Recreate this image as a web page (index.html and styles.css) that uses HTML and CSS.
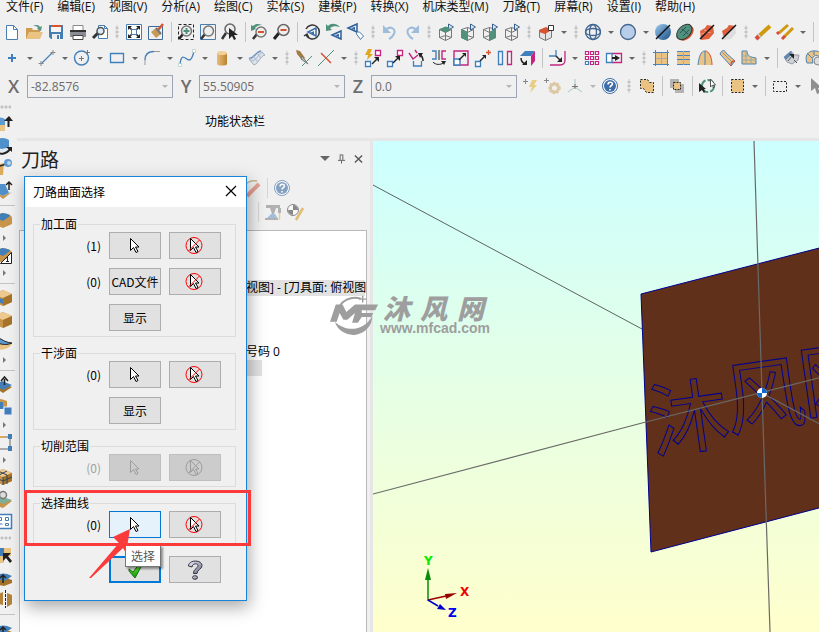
FILE: index.html
```
<!DOCTYPE html>
<html lang="zh-CN">
<head>
  <meta charset="UTF-8" />
  <meta name="viewport" content="width=device-width, initial-scale=1.0"/>
  <title>刀路曲面选择</title>
  <link rel="stylesheet" href="styles.css">
</head>
<body>

  <!-- icon set -->
  <svg class="sprite" aria-hidden="true">
    <defs>
      <linearGradient id="ball" x1="0" y1="0" x2="1" y2="1"><stop offset="0" stop-color="#9cc8ee"/><stop offset="1" stop-color="#174f86"/></linearGradient>
      <linearGradient id="gold" x1="0" x2="1"><stop offset="0" stop-color="#e8bd78"/><stop offset="1" stop-color="#bb8231"/></linearGradient>
      <linearGradient id="tick" x1="0" y1="0" x2="0" y2="1"><stop offset="0" stop-color="#7be33c"/><stop offset="1" stop-color="#0b9a0b"/></linearGradient>
      <linearGradient id="silver" x1="0" y1="0" x2="1" y2="1"><stop offset="0" stop-color="#eef"/><stop offset="1" stop-color="#66697c"/></linearGradient>
    </defs>
    <symbol id="new" viewBox="0 0 20 20"><path d="M4.500 3.500h7l4 4v10h-11z" fill="#fff" stroke="#4a7db0"/><path d="M11.500 3.500v4h4" fill="none" stroke="#4a7db0"/></symbol>
    <symbol id="open" viewBox="0 0 20 20"><path d="M2 6h6l1 2h7v9H2z" fill="#d09d50"/><path d="M5 10h14l-3 7H2z" fill="#eac282"/><path d="M9 4c4-2 6-1 7 1l2-1-1 5-4-2 1-1c-1-2-3-2-5-2z" fill="#579582"/></symbol>
    <symbol id="save" viewBox="0 0 20 20"><path d="M3 3h14v14H5l-2-2z" fill="#467eb4"/><path d="M5 4h10v6H5z" fill="#f5f5f5"/><path d="M5 3h10v2H5z" fill="#d8532f"/><path d="M6 12h8v5H6z" fill="#eee"/><path d="M11 13h2v4h-2z" fill="#467eb4"/></symbol>
    <symbol id="print" viewBox="0 0 20 20"><path d="M5 3.500h10V9H5z" fill="#fff" stroke="#888"/><path d="M2 9h16v6H2z" fill="#8a8e92"/><path d="M2 8h16v2H2z" fill="#333"/><path d="M5 13.500h10v4H5z" fill="#fff" stroke="#444"/></symbol>
    <symbol id="preview" viewBox="0 0 20 20"><path d="M8.500 3.500h6l3 3v10h-9z" fill="#fff" stroke="#4a7db0"/><path d="M14.500 3.500v3h3" fill="none" stroke="#4a7db0"/><path d="M8 11l-5 5" stroke="#333" stroke-width="3"/><circle cx="10.500" cy="9" r="3.500" fill="#dbe9f6" stroke="#555" stroke-width="1.500"/></symbol>
    <symbol id="fit" viewBox="0 0 20 20"><path d="M2.500 2.500h15v15h-15z" fill="#fff" stroke="#4a7db0"/><path d="M5 5l10 10M15 5L5 15" stroke="#222" stroke-width="1.500"/><path d="M4 4h4L4 8zM16 4h-4l4 4zM4 16h4l-4-4zM16 16h-4l4-4z" fill="#222"/><path d="M7.500 7.500h5v5h-5z" fill="#fff" stroke="#4a7db0"/></symbol>
    <symbol id="repaint" viewBox="0 0 20 20"><path d="M2.500 4.500h14v13h-14z" fill="none" stroke="#426a98"/><path d="M12 8l5-6" stroke="#d8532f" stroke-width="2.500"/><path d="M5 10l5-4 5 6-5 4z" fill="#c79a58"/><path d="M10 6l5 6" stroke="#777" stroke-width="2"/></symbol>
    <symbol id="zoomwin" viewBox="0 0 20 20"><path d="M2.500 2.500h15v15h-15z" fill="none" stroke="#222" stroke-dasharray="3 2"/><path d="M7 12l-4 5" stroke="#222" stroke-width="2.500"/><circle cx="10.500" cy="9" r="5" fill="#eee" stroke="#777" stroke-width="1.500"/><path d="M7.500 9h6M10.500 6v6" stroke="#4f917c" stroke-width="2"/></symbol>
    <symbol id="zoomtgt" viewBox="0 0 20 20"><path d="M2.500 2.500h15v15h-15z" fill="none" stroke="#4a7db0"/><path d="M7 12l-4 5" stroke="#333" stroke-width="2.500"/><circle cx="10.500" cy="9" r="5" fill="#eee" stroke="#777" stroke-width="1.500"/></symbol>
    <symbol id="zoomsel" viewBox="0 0 20 20"><path d="M6 11l-4 6" stroke="#333" stroke-width="2.500"/><circle cx="10" cy="7" r="5" fill="#eee" stroke="#666" stroke-width="1.500"/><path d="M9 6v11l3-3 2 4 2-1-2-4h4z" fill="#222"/></symbol>
    <symbol id="zoomprev" viewBox="0 0 20 20"><path d="M7 12l-4 5" stroke="#333" stroke-width="2.500"/><circle cx="11" cy="10" r="5" fill="#eee" stroke="#777" stroke-width="1.500"/><path d="M8 10h6" stroke="#d8532f" stroke-width="2"/><path d="M1 3v6l5-2-1-1c3-3 5-3 7-3C8 1 5 2 3 4z" fill="#4f917c"/></symbol>
    <symbol id="zoomout" viewBox="0 0 20 20"><path d="M7 11l-5 6" stroke="#222" stroke-width="3"/><circle cx="11.500" cy="8" r="5.500" fill="#eee" stroke="#666" stroke-width="1.500"/><path d="M8.500 8h6" stroke="#d8532f" stroke-width="2"/></symbol>
    <symbol id="rotate" viewBox="0 0 20 20"><path d="M4 7a7 7 0 1 1 0 6M2 14l3-2 2 4" fill="none" stroke="#333" stroke-width="1.500"/><path d="M14 6v8L6 10z" fill="#fff" stroke="#3e6ea5" stroke-width="1.500"/><path d="M12 9v4l-4-2z" fill="#3e6ea5"/></symbol>
    <symbol id="prevview" viewBox="0 0 20 20"><path d="M2 2v7l6-1-2-2c3-2 6-2 10-1C12 1 7 1 4 4z" fill="#4f917c"/><path d="M17 9v8L8 13z" fill="#eef" stroke="#2f5f98" stroke-width="1.500"/><path d="M15 12v3l-4-2z" fill="#2f5f98"/></symbol>
    <symbol id="viewtag" viewBox="0 0 20 20"><path d="M11 2v8L2 6z" fill="#eef" stroke="#2f5f98" stroke-width="1.500"/><path d="M9 5v3L5 6z" fill="#2f5f98"/><path d="M10.500 12v-2h3l4 4-3 3.500z" fill="#fff" stroke="#4a7db0"/></symbol>
    <symbol id="undo" viewBox="0 0 20 20"><path d="M5 8c6-5 11-1 9 4-1 2-3 4-5 5" fill="none" stroke="#9dbcd9" stroke-width="2"/><path d="M3 3v8h8z" fill="#9dbcd9"/></symbol>
    <symbol id="redo" viewBox="0 0 20 20"><path d="M15 8C9 3 4 7 6 12c1 2 3 4 5 5" fill="none" stroke="#9dbcd9" stroke-width="2"/><path d="M17 3v8H9z" fill="#9dbcd9"/></symbol>
    <symbol id="cube" viewBox="0 0 20 20"><path d="M3.500 7.500l6-2 6 2v8l-6 3-6-3zM3.500 7.500l6 3 6-3M9.500 10.500v8M9.500 5.500v8l-6 2M9.500 13.500l6 2" fill="none" stroke="#777"/><path d="M12.500 2v6l5-3z" fill="#dce6f0" stroke="#36618f"/></symbol>
    <symbol id="cubetop" viewBox="0 0 20 20"><use href="#cube"/><path d="M3 7.500l6.500-3 4 1v3l-4 2z" fill="#4f917c"/></symbol>
    <symbol id="cubefront" viewBox="0 0 20 20"><use href="#cube"/><path d="M3 7l7 3v9l-7-3z" fill="#4f917c"/></symbol>
    <symbol id="cuberight" viewBox="0 0 20 20"><use href="#cube"/><path d="M9 10l7-3v9l-7 3z" fill="#4f917c"/></symbol>
    <symbol id="plane" viewBox="0 0 20 20"><path d="M3.500 8.500l6-2 6 2v7l-6 3-6-3zM9.500 10.500v8" fill="#e4e4e4" stroke="#777"/><path d="M3 8l7-3 4 2v2l-5 3-6-2z" fill="#d8532f"/><path d="M12.500 3.500h5v5h-5z" fill="#fff" stroke="#333"/></symbol>
    <symbol id="wire" viewBox="0 0 20 20"><g fill="none" stroke="#3f6590" stroke-width="1.300"><circle cx="10" cy="10" r="7.500"/><ellipse cx="10" cy="10" rx="3.500" ry="7.500"/><ellipse cx="10" cy="10" rx="7.500" ry="3.500"/></g></symbol>
    <symbol id="sphere" viewBox="0 0 20 20"><circle cx="10" cy="10" r="7.500" fill="#b7cdea" stroke="#47698f" stroke-width="1.300"/></symbol>
    <symbol id="shade" viewBox="0 0 20 20"><circle cx="10" cy="10" r="8" fill="url(#ball)"/><path d="M3 17L17 3" stroke="#111" stroke-width="1.500"/></symbol>
    <symbol id="material" viewBox="0 0 20 20"><ellipse cx="11" cy="11" rx="9" ry="6" transform="rotate(-45 11 11)" fill="#d8532f"/><ellipse cx="9.500" cy="9.500" rx="9" ry="6" transform="rotate(-45 10 10)" fill="#4f917c" stroke="#333"/><path d="M5 11l6-6M8 14l6-6M7 7l6 5" stroke="#355" fill="none"/></symbol>
    <symbol id="trans" viewBox="0 0 20 20"><path d="M3 9l5-3 2-3 6 1 1 7-5 6-8 1z" fill="#e0603e"/><path d="M4 12l8-2M7 8l7 3" stroke="#f0a080"/><path d="M3 17L17 3" stroke="#111" stroke-width="1.500"/></symbol>
    <symbol id="trans2" viewBox="0 0 20 20"><path d="M3 9l5-3 2-3 6 1 1 7-5 6-8 1z" fill="#ddd"/><path d="M3 9l5-3 2-3 6 1L5 15z" fill="#e0603e"/><path d="M3 17L17 3" stroke="#111" stroke-width="1.500"/></symbol>
    <symbol id="crayon" viewBox="0 0 20 20"><path d="M5 15L17 4" stroke="#cf9a10" stroke-width="4"/><path d="M3 17l3-3" stroke="#d84b38" stroke-width="4"/><path d="M5 12l3 4" stroke="#ccc" stroke-width="1.500"/></symbol>
    <symbol id="crayons" viewBox="0 0 20 20"><path d="M4 11l9-8M9 15l9-9" stroke="#cf9a10" stroke-width="3"/><path d="M2 12l2-2M7 17l3-3" stroke="#d84b38" stroke-width="3"/></symbol>

    <symbol id="point" viewBox="0 0 20 20"><path d="M10 6v8M6 10h8" stroke="#3f7fbd" stroke-width="2"/></symbol>
    <symbol id="line" viewBox="0 0 20 20"><path d="M5 15L15 5" stroke="#4a83ba" stroke-width="1.300"/><path d="M1.500 15.500h5M4 13v5M13.500 4.500h5M16 2v5" stroke="#888"/></symbol>
    <symbol id="circle" viewBox="0 0 20 20"><circle cx="9.500" cy="10" r="7" fill="none" stroke="#4a83ba" stroke-width="1.500"/><path d="M7 10.500h5M9.500 8v5M13 4.500h5M15.500 2v5" stroke="#777"/></symbol>
    <symbol id="rect" viewBox="0 0 20 20"><path d="M3.500 5.500h13v9h-13z" fill="none" stroke="#3f7fbd" stroke-width="1.300"/></symbol>
    <symbol id="fillet" viewBox="0 0 20 20"><path d="M3 17v-5M12 3.500h6" stroke="#999" fill="none"/><path d="M3 12c0-5 3-8.500 9-8.500" stroke="#4a83ba" stroke-width="1.500" fill="none"/></symbol>
    <symbol id="spline" viewBox="0 0 20 20"><path d="M3 17C4 3 9 12 12 12s4-4 5-9" fill="none" stroke="#4a83ba" stroke-width="1.300"/><path d="M1.500 15.500h3v3h-3zM15.500 1.500h3v3h-3z" fill="#fff" stroke="#9bb" stroke-width=".5"/></symbol>
    <symbol id="cyl" viewBox="0 0 20 20"><path d="M5 5v11c0 2 10 2 10 0V5z" fill="url(#gold)"/><ellipse cx="10" cy="5" rx="5" ry="2" fill="#f0cf98"/></symbol>
    <symbol id="surf" viewBox="0 0 20 20"><path d="M2 11C7 12 8 5 13 3l5 4c-5 1-6 8-11 10z" fill="#dfe5ec" stroke="#9ab"/><path d="M2 10C7 11 8 4 14 3" fill="none" stroke="#6f97c6" stroke-width="1.300"/><path d="M4 13c6 0 7-7 12-9M6 8l5 6M10 5l4 5" fill="none" stroke="#a9b6c6"/></symbol>
    <symbol id="trim" viewBox="0 0 20 20"><path d="M8 18L18 8" stroke="#4f917c"/><path d="M2 2l4 1 5 7-3 2-5-6z" fill="#a57b45"/><path d="M8 8l6 8-7-5z" fill="#bbb" stroke="#777"/></symbol>
    <symbol id="break" viewBox="0 0 20 20"><path d="M2 18L18 2" stroke="#4f917c"/><path d="M5 5l10 10" stroke="#d8532f" stroke-width="1.500"/></symbol>
    <symbol id="dyn" viewBox="0 0 20 20"><path d="M5 1h4L7 6h3l-6 6 1-5H2z" fill="#e0a820"/><path d="M12.500 2.500h5v5h-5z" fill="#fff" stroke="#c4257f" stroke-width="1.300"/><path d="M2.500 13.500h5v5h-5z" fill="#fff" stroke="#3f7fbd" stroke-width="1.300"/><path d="M9 16l5-5" stroke="#222" stroke-width="1.500"/><path d="M11 9h5v5z" fill="#222"/></symbol>
    <symbol id="move" viewBox="0 0 20 20"><path d="M12.500 2.500h5v5h-5z" fill="#fff" stroke="#c4257f" stroke-width="1.300"/><path d="M2.500 13.500h5v5h-5z" fill="#fff" stroke="#3f7fbd" stroke-width="1.300"/><path d="M8 15l5-5" stroke="#222" stroke-width="1.500"/><path d="M10 8h5v5z" fill="#222"/></symbol>
    <symbol id="rot" viewBox="0 0 20 20"><path d="M6.500 13v5h8v-5" fill="none" stroke="#3f7fbd" stroke-width="1.300"/><path d="M2 5l4 6 5-4M8 2l2 3" fill="none" stroke="#c4257f" stroke-width="1.400"/><path d="M16 13c0-3-1-5-3-6" fill="none" stroke="#222" stroke-width="1.500"/><path d="M11 5l5 0-3 5z" fill="#222"/></symbol>
    <symbol id="mirror" viewBox="0 0 20 20"><path d="M3 3h4v8H3" fill="none" stroke="#3f7fbd" stroke-width="1.400"/><path d="M17 3h-4v8h4" fill="none" stroke="#c4257f" stroke-width="1.400"/><path d="M10 2v10M4 14c2 3 8 3 10 1" fill="none" stroke="#222"/><path d="M12 13h5l-2 4z" fill="#222"/></symbol>
    <symbol id="scale" viewBox="0 0 20 20"><path d="M3 3h14v14H3z" fill="none" stroke="#c4257f" stroke-width="1.400"/><path d="M3 11h6v6H3z" fill="#fff" stroke="#3f7fbd" stroke-width="1.400"/><path d="M8 12l5-5" stroke="#222" stroke-width="1.500"/><path d="M11 5h4v4z" fill="#222"/></symbol>
    <symbol id="offset" viewBox="0 0 20 20"><path d="M2.500 13.500h5v5h-5z" fill="#fff" stroke="#3f7fbd" stroke-width="1.300"/><path d="M7 13l4-4" stroke="#222" stroke-width="1.500"/><path d="M9 7h4v4z" fill="#222"/><path d="M13 4.500h5M15.500 2v5" stroke="#d8532f" stroke-width="1.300"/></symbol>
    <symbol id="pair" viewBox="0 0 20 20"><path d="M3.500 3.500h4v13h-4z" fill="none" stroke="#3f7fbd" stroke-width="1.300"/><path d="M12.500 3.500h4v13h-4z" fill="none" stroke="#c4257f" stroke-width="1.300"/></symbol>
    <symbol id="roll" viewBox="0 0 20 20"><path d="M8 3h10l-4 5H3z" fill="#3f7fbd"/><path d="M18 3v10l-4 5V8z" fill="#c4257f"/><path d="M4 10c0 3 2 5 4 6" fill="none" stroke="#222" stroke-width="1.500"/><path d="M10 12v5H5z" fill="#222"/></symbol>
    <symbol id="corner" viewBox="0 0 20 20"><path d="M18 3v9q0 5-5 5H3" fill="none" stroke="#c4257f" stroke-width="1.300"/><path d="M2 8h7V2" fill="none" stroke="#3f7fbd" stroke-width="1.300"/><path d="M9 8l4 4" stroke="#222" stroke-width="1.500"/><path d="M15 9v5h-5z" fill="#222"/></symbol>
    <symbol id="array" viewBox="0 0 20 20"><path d="M3.500 3.500h3v3h-3zM8.500 3.500h3v3h-3zM13.500 3.500h3v3h-3zM3.500 8.500h3v3h-3zM8.500 8.500h3v3h-3zM13.500 8.500h3v3h-3zM8.500 13.500h3v3h-3zM13.500 13.500h3v3h-3z" fill="#fff" stroke="#c4257f" stroke-width="1.200"/><path d="M3.500 13.500h3v3h-3z" fill="#fff" stroke="#3f7fbd" stroke-width="1.200"/></symbol>
    <symbol id="stretch" viewBox="0 0 20 20"><path d="M8 5.500h9.500v9H8" fill="none" stroke="#c4257f" stroke-width="1.300"/><path d="M8 5.500H2.500v9H8z" fill="#fff" stroke="#3f7fbd" stroke-width="1.300"/><path d="M8 10h4" stroke="#222" stroke-width="2"/><path d="M11 7l5 3-5 3z" fill="#222"/></symbol>
    <symbol id="mesh" viewBox="0 0 20 20"><path d="M4 4h13v13H4z" fill="#eac282"/><path d="M10.500 4v13M4 10.500h13" stroke="#aaa"/><path d="M4.500 2v16M16.500 2v16M2 4.500h16M2 16.500h16" stroke="#4a83ba" fill="none"/></symbol>
    <symbol id="ruled" viewBox="0 0 20 20"><path d="M4 4h13v13H4z" fill="#eac282"/><path d="M4 3.500h13M4 7.500h13M4 11.500h13M4 16.500h13" stroke="#4a83ba"/><path d="M10.500 3v14" stroke="#aaa"/></symbol>
    <symbol id="revolve" viewBox="0 0 20 20"><path d="M3 17C4 8 6 3 10 3s7 6 7 14z" fill="#eac282"/><path d="M3 17C4 8 6 3 10 3M10 3v14" fill="none" stroke="#4a83ba"/><path d="M10 3c4 0 7 6 7 14" fill="none" stroke="#d8532f"/></symbol>
    <symbol id="sweep" viewBox="0 0 20 20"><path d="M3 6c2-5 5-4 6-1l9 8-4 5z" fill="#eac282" stroke="#4a83ba"/><path d="M5 4l11 11" stroke="#999"/><path d="M18 13c-4 0-4 2-4 5" fill="none" stroke="#d8532f" stroke-width="1.300"/></symbol>
    <symbol id="net" viewBox="0 0 20 20"><path d="M3 3h5c0 5 3 6 9 7v6H3z" fill="#eac282" stroke="#4a83ba"/><path d="M3 8h6M3 12h14M7 3v13M12 9v7" stroke="#9aa" fill="none"/></symbol>
    <symbol id="fence" viewBox="0 0 20 20"><path d="M2 9l7-6 3 4h5l-1 5-6 4-5-2z" fill="#ccd1d6" stroke="#99a"/><path d="M2 9l7-6 1 3-6 6z" fill="#5d88b3"/><path d="M7 6h5v5z" fill="#222"/><path d="M10 8l-4 5M12 12l3 3" stroke="#555"/></symbol>
    <symbol id="arch" viewBox="0 0 20 20"><path d="M3 15C-1 4 9 0 18 5v5C11 5 7 8 9 15z" fill="#eac282" stroke="#4a83ba"/><path d="M3 5l5 5M10 3v4" stroke="#4a83ba"/><circle cx="14" cy="13" r="4" fill="#ddd" stroke="#888"/></symbol>

    <symbol id="fast" viewBox="0 0 20 20"><path d="M2 5.500h5M4.500 3v5" stroke="#888"/><path d="M11 4h5l-3 5h3l-7 8 2-6H8z" fill="#e8cd83"/></symbol>
    <symbol id="gear" viewBox="0 0 20 20"><path d="M1 4.500h5M3.500 2v5" stroke="#888"/><circle cx="11.500" cy="12" r="4" fill="none" stroke="#dcc8a4" stroke-width="3"/><circle cx="11.500" cy="12" r="5.500" fill="none" stroke="#dcc8a4" stroke-dasharray="2 2" stroke-width="1.500"/></symbol>
    <symbol id="axis" viewBox="0 0 20 20"><path d="M10 3v7M10 11l-7 5M10 11l7 5" stroke="#a9c7bd" fill="none"/><path d="M7 10.500h6M10 8v5" stroke="#777"/></symbol>
    <symbol id="help" viewBox="0 0 20 20"><circle cx="10" cy="10" r="7.500" fill="#fff" stroke="#3d6da6"/><circle cx="10" cy="10" r="6" fill="#3d6da6"/><path d="M8 8.500c0-3 4.500-3 4.500-.5 0 1.500-2.500 1.500-2.500 3.500M10 13v1.500" fill="none" stroke="#fff" stroke-width="1.600"/></symbol>
    <symbol id="union" viewBox="0 0 20 20"><path d="M3.500 3.500h7l2 3h4v10h-7l-3-4h-3z" fill="#eac282" stroke="#222" stroke-dasharray="2 1.500"/></symbol>
    <symbol id="inside" viewBox="0 0 20 20"><path d="M3 3h9v3H6v6H3zM8 14h6V8h3v9H8z" fill="#b3b3b3"/><path d="M6.500 6.500h7v7h-7z" fill="#eac282" stroke="#222" stroke-dasharray="2 1"/></symbol>
    <symbol id="cycle" viewBox="0 0 20 20"><circle cx="11" cy="10" r="6" fill="none" stroke="#4f917c" stroke-width="2" stroke-dasharray="7 2"/><path d="M2 7v9l3-2 2 3 1-1-1-3h2z" fill="#222"/><path d="M13.500 3v8l2-2 1 3 1-1-1-2h2z" fill="#fff" stroke="#333" stroke-width=".8"/></symbol>
    <symbol id="selall" viewBox="0 0 20 20"><path d="M4.500 3.500h12v13h-12z" fill="#eac282" stroke="#222" stroke-dasharray="2 1.500"/></symbol>
    <symbol id="selwin" viewBox="0 0 20 20"><path d="M3.500 5.500h13v10h-13z" fill="none" stroke="#222" stroke-dasharray="2 1.500"/></symbol>
    <symbol id="ptr" viewBox="0 0 20 20"><path d="M6 2v13l4-3 2 6 3-1-2-5h4z" fill="#8e8e8e"/></symbol>

    <!-- side rail solids -->
    <symbol id="block" viewBox="0 0 20 20"><path d="M1 6l9-4 9 4v8l-9 4-9-4z" fill="#c8944a"/><path d="M1 6l9-4 9 4-9 4z" fill="#edc98f"/><path d="M10 10l9-4v8l-9 4z" fill="#a67428"/></symbol>
    <symbol id="extrude" viewBox="0 0 20 20"><path d="M1 5q7-3 11 0v6H1z" fill="#5e9bd0"/><path d="M1 11h11v6H1z" fill="#eac282"/><path d="M15.500 13V6" stroke="#222" stroke-width="2"/><path d="M11 7l5-5 4 5z" fill="#222"/></symbol>
    <symbol id="spin" viewBox="0 0 20 20"><path d="M2 4q8-4 14 0v7q-7 4-14 0z" fill="#4f8fca"/><path d="M2 11q7 4 14 0v3q-7 4-14 0z" fill="#dfeaf4"/><path d="M3 16c5 3 11 2 14-3" fill="none" stroke="#222" stroke-width="2"/><path d="M13 11h6v5z" fill="#222"/></symbol>
    <symbol id="swept" viewBox="0 0 20 20"><path d="M2 7l9-2-1 12H5z" fill="#dda95b"/><path d="M4 9l9-3" stroke="#222" stroke-width="1.500"/><circle cx="15" cy="5" r="4" fill="#5e9bd0"/><circle cx="16" cy="5" r="2" fill="#bcd6ec"/></symbol>
    <symbol id="loft" viewBox="0 0 20 20"><path d="M4 13l3-9h5l4 9-6 3z" fill="#4f8fca"/><path d="M2 12l8 4 9-4-9 7z" fill="#c8944a"/><path d="M16 10V3M13 5l3-3 3 3" fill="none" stroke="#222" stroke-width="1.500"/></symbol>
    <symbol id="round" viewBox="0 0 20 20"><path d="M1 7l8-4q10 1 10 5v6l-9 4-9-4z" fill="#c8944a"/><path d="M1 7l8-4q8 1 8 3l-7 5z" fill="#427fb9"/></symbol>
    <symbol id="draft" viewBox="0 0 20 20"><use href="#round"/><path d="M18.500 7.500v11h-11z" fill="#fff" stroke="#222"/><path d="M14.500 12v4M13 16.500h3M13 13l2-1" stroke="#222"/></symbol>
    <symbol id="shell" viewBox="0 0 20 20"><use href="#block"/><path d="M3 9l7 2v5l-7-3z" fill="#427fb9"/></symbol>
    <symbol id="thicken" viewBox="0 0 20 20"><path d="M1 9c7 0 9 3 18 3-4 6-12 7-18 4z" fill="#eac282"/><path d="M1 5c7 0 8 5 18 6-7 3-13 1-18-2z" fill="#5e9bd0" stroke="#222"/></symbol>
    <symbol id="pushup" viewBox="0 0 20 20"><path d="M1 12l8-4 10 4-9 6z" fill="#a67428"/><path d="M1 10l8-4 10 4-9 5z" fill="#427fb9"/><path d="M11.500 10V4M8 6l3.500-4 3.500 4" fill="none" stroke="#222" stroke-width="1.500"/></symbol>
    <symbol id="copyface" viewBox="0 0 20 20"><path d="M1 3l7-1 6 2v8H5z" fill="#c8944a"/><path d="M1 5h9v7H1z" fill="#427fb9"/><path d="M11 10h8v8h-8z" fill="#427fb9" stroke="#eef"/></symbol>
    <symbol id="nodes" viewBox="0 0 20 20"><path d="M5 5h12v12H5" fill="none" stroke="#666"/><path d="M3 5h9" stroke="#dda95b" stroke-width="2"/><path d="M15 2h4v5h-4zM15 14h4v5h-4zM3 14h4v5H3z" fill="#427fb9"/></symbol>
    <symbol id="grid3" viewBox="0 0 20 20"><use href="#block"/><path d="M1 10l9 4 9-4M5 4l9 4v9M14 4L6 8v8M10 10v8" fill="none" stroke="#345"/></symbol>
    <symbol id="inspect" viewBox="0 0 20 20"><path d="M2 12l8-3 9 3-9 7-8-3z" fill="#c8944a"/><path d="M2 11l8-3 9 3-9 4z" fill="#7cae98"/><circle cx="10" cy="6" r="3.500" fill="#ddd" stroke="#777" stroke-width="1.500"/></symbol>
    <symbol id="layout" viewBox="0 0 20 20"><path d="M2.500 3.500h16v14h-16z" fill="#fff" stroke="#427fb9" stroke-width="1.500"/><path d="M5.500 6.500h3v3h-3zM12.500 6.500h3v3h-3zM5.500 13h4M12.500 12.500h3v2h-3z" fill="none" stroke="#427fb9"/></symbol>
    <symbol id="quad" viewBox="0 0 20 20"><path d="M1 3h10v8H1z" fill="#427fb9"/><path d="M11 3h7v8h-7zM1 11h10v7H1z" fill="#eac282"/><path d="M10 8h8l-3 3 4 5-2 2-4-5-3 3z" fill="#222"/></symbol>
    <symbol id="bend" viewBox="0 0 20 20"><path d="M1 14q5-7 18-1v3l-8 3-10-2z" fill="#a67428"/><path d="M1 12q5-9 18-3l-7 5z" fill="#427fb9"/><path d="M10 16V9M7 11l3-3 3 3" fill="none" stroke="#222" stroke-width="1.500"/></symbol>
    <symbol id="split" viewBox="0 0 20 20"><path d="M3 6l7-3v13l-7-2zM14 4l5 2v9l-5 3z" fill="#b5843a"/><path d="M12.500 1v18" stroke="#222" stroke-dasharray="3 1"/></symbol>

    <!-- dialog icons -->
    <symbol id="arrow" viewBox="2 0 20 20"><path d="M7.500 2.500v12l3-3 2.500 5 2-1-2.500-4.500h3.500z" fill="#fff" stroke="#000"/></symbol>
    <symbol id="noarrow" viewBox="2 0 20 20"><circle cx="11" cy="9.500" r="8" fill="none" stroke="red"/><path d="M7.500 2.500v12l3-3 2.500 5 2-1-2.500-4.500h3.500z" fill="#fff" stroke="#000"/><path d="M16.500 4L5.500 15" stroke="red"/></symbol>
    <symbol id="arrowoff" viewBox="2 0 20 20"><path d="M7.500 2.500v12l3-3 2.500 5 2-1-2.500-4.500h3.500z" fill="none" stroke="#9c9c9c"/></symbol>
    <symbol id="noarrowoff" viewBox="2 0 20 20"><circle cx="11" cy="9.500" r="8" fill="none" stroke="#9c9c9c"/><path d="M7.500 2.500v12l3-3 2.500 5 2-1-2.500-4.500h3.500zM16.500 4L5.500 15" fill="none" stroke="#9c9c9c"/></symbol>
    <symbol id="ok" viewBox="0 0 20 20"><path d="M4 9l4 3 7-9 2 2-7 13-6-7z" fill="url(#tick)" stroke="#117311"/></symbol>
    <symbol id="what" viewBox="0 0 20 20"><path d="M3.500 6C3.500-.5 17 -.5 17 5.500c0 4-5 4-5 8H8.500c0-5 4.500-5 4.500-8C13 3 7.500 3 7 7z" fill="url(#silver)" stroke="#334"/><ellipse cx="10" cy="17.500" rx="2.500" ry="1.800" fill="url(#silver)" stroke="#334"/></symbol>
    <symbol id="marker" viewBox="0 0 20 20"><path d="M2 8c3-4 8-6 13-5" fill="none" stroke="#a6904a" stroke-width="1.500"/><path d="M5 18L17 6" stroke="#dd6a55" stroke-width="4"/></symbol>
    <symbol id="mill" viewBox="0 0 20 20"><path d="M3 3h14v3h-4l-2 6H9L7 6H3z" fill="#888"/><path d="M3 17l5-5h4l3 5z" fill="#6aa0cc"/><path d="M2 16h13v2H2zM15 6h3v5h-3z" fill="#888"/><path d="M16.500 11v7" stroke="#e0b970" stroke-width="1.500"/></symbol>
    <symbol id="datum" viewBox="0 0 20 20"><circle cx="8" cy="8" r="5.500" fill="#fff" stroke="#444"/><path d="M8 8V3a5 5 0 0 1 5 5zM8 8v5a5 5 0 0 1-5-5z" fill="#444"/><path d="M11 18l7-12" stroke="#d99c1e" stroke-width="2.500"/></symbol>
  </svg>

  <nav class="menu">
    <a href="#">文件(F)</a><a href="#">编辑(E)</a><a href="#">视图(V)</a><a href="#">分析(A)</a><a href="#">绘图(C)</a><a href="#">实体(S)</a><a href="#">建模(P)</a><a href="#">转换(X)</a><a href="#">机床类型(M)</a><a href="#">刀路(T)</a><a href="#">屏幕(R)</a><a href="#">设置(I)</a><a href="#">帮助(H)</a>
  </nav>

  <div class="toolbar">
    <button aria-label="新建"><svg><use href="#new"/></svg></button>
    <button aria-label="打开"><svg><use href="#open"/></svg></button>
    <button aria-label="保存"><svg><use href="#save"/></svg></button>
    <button aria-label="打印"><svg><use href="#print"/></svg></button>
    <button aria-label="预览"><svg><use href="#preview"/></svg></button>
    <i class="grip"></i>
    <button aria-label="适度化"><svg><use href="#fit"/></svg></button>
    <button aria-label="重画"><svg><use href="#repaint"/></svg></button>
    <i class="sep"></i>
    <button aria-label="窗口放大"><svg><use href="#zoomwin"/></svg></button>
    <button aria-label="目标放大"><svg><use href="#zoomtgt"/></svg></button>
    <button aria-label="选择放大"><svg><use href="#zoomsel"/></svg></button>
    <i class="sep"></i>
    <button aria-label="上一缩放"><svg><use href="#zoomprev"/></svg></button>
    <button aria-label="缩小"><svg><use href="#zoomout"/></svg></button>
    <i class="sep"></i>
    <button aria-label="旋转"><svg><use href="#rotate"/></svg></button>
    <button aria-label="前一视图"><svg><use href="#prevview"/></svg></button>
    <button aria-label="命名视图"><svg><use href="#viewtag"/></svg></button>
    <i class="grip"></i>
    <button aria-label="撤销"><svg><use href="#undo"/></svg></button>
    <button aria-label="重做"><svg><use href="#redo"/></svg></button>
    <i class="grip"></i>
    <button aria-label="俯视图"><svg><use href="#cubetop"/></svg></button>
    <button aria-label="前视图"><svg><use href="#cubefront"/></svg></button>
    <button aria-label="右视图"><svg><use href="#cuberight"/></svg></button>
    <button aria-label="等视图"><svg><use href="#cube"/></svg></button>
    <i class="grip"></i>
    <button aria-label="平面"><svg><use href="#plane"/></svg></button><button class="drop" aria-label="更多"></button>
    <i class="grip"></i>
    <button aria-label="线框"><svg><use href="#wire"/></svg></button><button class="drop" aria-label="更多"></button>
    <button aria-label="着色"><svg><use href="#sphere"/></svg></button><button class="drop" aria-label="更多"></button>
    <button aria-label="半着色"><svg><use href="#shade"/></svg></button>
    <button aria-label="材质"><svg><use href="#material"/></svg></button>
    <button aria-label="透明"><svg><use href="#trans"/></svg></button>
    <button aria-label="背面"><svg><use href="#trans2"/></svg></button>
    <i class="grip"></i>
    <button aria-label="清除颜色"><svg><use href="#crayon"/></svg></button>
    <button aria-label="属性"><svg><use href="#crayons"/></svg></button><button class="drop" aria-label="更多"></button>
    <i class="sep"></i>
  </div>

  <div class="toolbar">
    <button aria-label="点"><svg><use href="#point"/></svg></button><button class="drop" aria-label="更多"></button>
    <button aria-label="线"><svg><use href="#line"/></svg></button><button class="drop" aria-label="更多"></button>
    <button aria-label="圆"><svg><use href="#circle"/></svg></button><button class="drop" aria-label="更多"></button>
    <button aria-label="矩形"><svg><use href="#rect"/></svg></button><button class="drop" aria-label="更多"></button>
    <button aria-label="倒圆角"><svg><use href="#fillet"/></svg></button><button class="drop" aria-label="更多"></button>
    <button aria-label="曲线"><svg><use href="#spline"/></svg></button><button class="drop" aria-label="更多"></button>
    <button aria-label="圆柱"><svg><use href="#cyl"/></svg></button><button class="drop" aria-label="更多"></button>
    <button aria-label="曲面"><svg><use href="#surf"/></svg></button><button class="drop" aria-label="更多"></button>
    <i class="grip"></i>
    <button aria-label="修剪"><svg><use href="#trim"/></svg></button>
    <button aria-label="打断"><svg><use href="#break"/></svg></button><button class="drop" aria-label="更多"></button>
    <i class="grip"></i>
    <button aria-label="动态"><svg><use href="#dyn"/></svg></button>
    <button aria-label="平移"><svg><use href="#move"/></svg></button>
    <button aria-label="旋转"><svg><use href="#rot"/></svg></button>
    <button aria-label="镜像"><svg><use href="#mirror"/></svg></button>
    <button aria-label="比例"><svg><use href="#scale"/></svg></button>
    <button aria-label="移到原点"><svg><use href="#offset"/></svg></button>
    <button aria-label="补正"><svg><use href="#pair"/></svg></button>
    <button aria-label="缠绕"><svg><use href="#roll"/></svg></button>
    <i class="sep"></i>
    <button aria-label="串连补正"><svg><use href="#corner"/></svg></button><button class="drop" aria-label="更多"></button>
    <button aria-label="阵列"><svg><use href="#array"/></svg></button>
    <button aria-label="拉伸"><svg><use href="#stretch"/></svg></button><button class="drop" aria-label="更多"></button>
    <i class="grip"></i>
    <button aria-label="网状曲面"><svg><use href="#mesh"/></svg></button>
    <button aria-label="举升曲面"><svg><use href="#ruled"/></svg></button>
    <button aria-label="旋转曲面"><svg><use href="#revolve"/></svg></button>
    <button aria-label="扫描曲面"><svg><use href="#sweep"/></svg></button>
    <button aria-label="牵引曲面"><svg><use href="#net"/></svg></button><button class="drop" aria-label="更多"></button>
    <i class="sep"></i>
    <button aria-label="修剪曲面"><svg><use href="#fence"/></svg></button>
    <button aria-label="延伸曲面"><svg><use href="#arch"/></svg></button>
  </div>

  <div class="toolbar coords">
    <label for="cx">X</label><div class="combo"><input id="cx" value="-82.8576"><span></span></div>
    <label for="cy">Y</label><div class="combo"><input id="cy" value="55.50905"><span></span></div>
    <label for="cz">Z</label><div class="combo"><input id="cz" value="0.0"><span></span></div>
    <button aria-label="快速点"><svg><use href="#fast"/></svg></button>
    <button aria-label="抓点设置"><svg><use href="#gear"/></svg></button>
    <button aria-label="抓点"><svg><use href="#axis"/></svg></button><button class="drop faint" aria-label="更多"></button>
    <button aria-label="帮助"><svg><use href="#help"/></svg></button>
    <i class="grip"></i>
    <button aria-label="标准选择"><svg><use href="#union"/></svg></button>
    <i class="sep"></i>
    <button aria-label="范围内"><svg><use href="#inside"/></svg></button>
    <i class="sep"></i>
    <button aria-label="反选"><svg><use href="#cycle"/></svg></button>
    <i class="sep"></i>
    <button aria-label="全选"><svg><use href="#selall"/></svg></button><button class="drop" aria-label="更多"></button>
    <i class="sep"></i>
    <button aria-label="窗选"><svg><use href="#selwin"/></svg></button><button class="drop" aria-label="更多"></button>
    <button aria-label="选择"><svg><use href="#ptr"/></svg></button>
  </div>

  <div class="main">
    <aside class="rail">
      <i class="dots"></i>
      <svg><use href="#extrude"/></svg>
      <svg><use href="#spin"/></svg>
      <svg><use href="#swept"/></svg>
      <svg><use href="#loft"/></svg>
      <i class="line"></i>
      <svg><use href="#round"/></svg>
      <i class="more"></i>
      <svg><use href="#draft"/></svg>
      <i class="more"></i>
      <i class="line"></i>
      <svg><use href="#shell"/></svg>
      <svg><use href="#block"/></svg>
      <svg><use href="#thicken"/></svg>
      <i class="more"></i>
      <i class="line"></i>
      <svg><use href="#pushup"/></svg>
      <svg><use href="#copyface"/></svg>
      <i class="more"></i>
      <svg><use href="#nodes"/></svg>
      <i class="more"></i>
      <svg><use href="#grid3"/></svg>
      <svg><use href="#inspect"/></svg>
      <svg><use href="#layout"/></svg>
      <i class="dots"></i>
      <svg><use href="#quad"/></svg>
      <svg><use href="#bend"/></svg>
      <svg><use href="#split"/></svg>
      <i class="line"></i>
      <svg><use href="#bend"/></svg>
    </aside>

    <div class="content">
      <div class="status">功能状态栏</div>
      <div class="work">
        <section class="panel">
          <header class="panel-head">
            <h1>刀路</h1>
            <button class="caret" aria-label="菜单"></button>
            <button aria-label="固定"><svg viewBox="0 0 10 10"><path d="M3 .5h4M3.500 1v5M6.500 1v5M1 6.500h8M5 7v3" fill="none" stroke="#555"/></svg></button>
            <button aria-label="关闭"><svg viewBox="0 0 10 10"><path d="M1 1l8 8M9 1L1 9" stroke="#555" stroke-width="1.500"/></svg></button>
          </header>
          <div class="panel-tools">
            <svg><use href="#marker"/></svg><i class="sep"></i><svg><use href="#help"/></svg>
          </div>
          <div class="panel-tools low">
            <i class="sep"></i><svg><use href="#mill"/></svg><svg><use href="#datum"/></svg>
          </div>
          <div class="tree">
            <p class="hot">视图] - [刀具面: 俯视图</p>
            <p class="code">号码 0</p>
            <p class="stub"></p>
          </div>
        </section>

        <section class="view">
          <svg class="scene">
            <path d="M0 44L269 188" stroke="#5a6460" fill="none"/>
            <path d="M268 153L900 -10V248L278 411z" fill="#60301a" stroke="#000090"/>
            <text x="280 356 430" y="311 289 272" rotate="-8">沐风网</text>
            <g fill="none" stroke="#6a6a68" stroke-width="1.200">
              <path d="M0 353L269 282 900 121"/>
              <path d="M381 0L389 252 398 520"/>
              <path d="M389 252L900 526"/>
            </g>
            <circle cx="389" cy="252" r="5" fill="#fff"/>
            <path d="M389 252v-5a5 5 0 0 1 5 5zM389 252v5a5 5 0 0 1-5-5z" fill="#0a6ad0"/>
          </svg>
          <svg class="gnomon" viewBox="0 0 52 70">
            <path d="M9 47V26" stroke="#0a8a0a" stroke-width="1.500"/><path d="M9 14l3 12H6z" fill="#0a8a0a"/>
            <path d="M9 46l18-4" stroke="#900" stroke-width="1.500"/><path d="M38 39l-11 6-1-5z" fill="#900"/>
            <path d="M9 46l10 6" stroke="#00c" stroke-width="1.500"/><path d="M27 56l-9-1 3-5z" fill="#00c"/>
            <text x="5" y="11" fill="#0e0">Y</text><text x="41" y="42" fill="#e00">X</text><text x="29" y="63" fill="#00e">Z</text>
          </svg>
        </section>
      </div>
    </div>
  </div>

  <!-- site watermark -->
  <div class="mark">
    <svg viewBox="0 0 52 42">
      <path d="M32 4A19 19 0 0 0 8 16" fill="none" stroke="#9e9e9e" stroke-width="2"/>
      <path d="M5 28a20 20 0 0 0 39-6c-8 15-26 18-39 6z" fill="#9e9e9e"/>
      <path d="M0 28L6 10h7l4 8 9-8h24l-3 6H33v3h12l-2 4H33l-4 6h-6l3-10-8 7h-4l-4-7-3 9z" fill="#9e9e9e"/>
      <path d="M34 1v7M30 4.500h8" stroke="#9e9e9e" stroke-width="1.500"/>
    </svg>
    <div>
      <p class="name"><b>沐</b><b>风</b><b>网</b></p>
      <p class="url">www.mfcad.com</p>
    </div>
  </div>

  <div class="dialog" role="dialog" aria-labelledby="dlg-title">
    <div class="titlebar">
      <span id="dlg-title">刀路曲面选择</span>
      <button aria-label="关闭"><svg viewBox="0 0 12 12"><path d="M1 1l10 10M11 1L1 11" stroke="#000" stroke-width="1.200"/></svg></button>
    </div>
    <form>
      <fieldset>
        <legend>加工面</legend>
        <div class="row"><span>(1)</span><button type="button" aria-label="选择"><svg><use href="#arrow"/></svg></button><button type="button" aria-label="取消"><svg><use href="#noarrow"/></svg></button></div>
        <div class="row"><span>(0)</span><button type="button">CAD文件</button><button type="button" aria-label="取消"><svg><use href="#noarrow"/></svg></button></div>
        <div class="row"><span></span><button type="button">显示</button></div>
      </fieldset>
      <fieldset>
        <legend>干涉面</legend>
        <div class="row"><span>(0)</span><button type="button" aria-label="选择"><svg><use href="#arrow"/></svg></button><button type="button" aria-label="取消"><svg><use href="#noarrow"/></svg></button></div>
        <div class="row"><span></span><button type="button">显示</button></div>
      </fieldset>
      <fieldset class="off">
        <legend>切削范围</legend>
        <div class="row"><span>(0)</span><button type="button" disabled aria-label="选择"><svg><use href="#arrowoff"/></svg></button><button type="button" disabled aria-label="取消"><svg><use href="#noarrowoff"/></svg></button></div>
      </fieldset>
      <fieldset>
        <legend>选择曲线</legend>
        <div class="row"><span>(0)</span><button type="button" class="hover" aria-label="选择"><svg><use href="#arrow"/></svg></button><button type="button" aria-label="取消"><svg><use href="#noarrow"/></svg></button></div>
      </fieldset>
      <div class="row actions"><span></span><button type="button" class="default" aria-label="确定"><svg><use href="#ok"/></svg></button><button type="button" aria-label="帮助"><svg><use href="#what"/></svg></button></div>
    </form>
    <svg class="pointer" viewBox="0 0 46 50"><path d="M0 49L30 14l-6-6L41 0l-4 24-3-5L2 49z" fill="#fb3b3b"/></svg>
    <div class="tip">选择</div>
    <div class="callout"></div>
  </div>

</body>
</html>
```
FILE: styles.css
```
* {
  box-sizing: border-box;
}
body {
  margin: 0;
  height: 100vh;
  display: flex;
  flex-direction: column;
  overflow: hidden;
  position: relative;
  background: #f0f0f0;
  color: #000;
  font-family: "Open Sans", "Noto Sans CJK SC", sans-serif;
  font-size: 12px;
}
p, h1 {
  margin: 0;
}
button {
  border: none;
  background: none;
  padding: 0;
  font: inherit;
}
.sprite {
  position: absolute;
  width: 0;
  height: 0;
}

/* menu and toolbars */
.menu {
  display: flex;
  gap: 14px;
  height: 19px;
  padding-left: 6px;
  line-height: 14px;
  flex-shrink: 0;
}
.menu a {
  color: #111;
  text-decoration: none;
  white-space: nowrap;
}
.toolbar {
  display: flex;
  align-items: center;
  height: 26px;
  padding-left: 1px;
  flex-shrink: 0;
}
.toolbar > * {
  flex-shrink: 0;
}
.toolbar button {
  width: 22px;
  height: 22px;
  display: flex;
  align-items: center;
  justify-content: center;
}
.toolbar svg {
  width: 20px;
  height: 20px;
}
.toolbar .drop {
  width: 13px;
}
.drop::after, .combo span, .caret::after {
  content: "";
  border: 3px solid transparent;
  border-top-color: #666;
  border-bottom: none;
}
.drop.faint::after, .combo span {
  border-top-color: #b5b5b5;
}
.grip {
  width: 12px;
  height: 14px;
  background: radial-gradient(circle, #c2c2c2 1px, transparent 2px) center / 4px 4px repeat-y;
}
.sep {
  width: 8px;
  height: 20px;
  background: linear-gradient(#c4c4c4, #c4c4c4) center / 1px 100% no-repeat;
}
.coords {
  height: 30px;
  padding-left: 0;
}
.coords .grip {
  width: 15px;
}
.coords label {
  width: 26px;
  text-align: center;
  font: 600 18px "Open Sans", sans-serif;
  color: #6e6e6e;
}
.combo {
  width: 146px;
  height: 23px;
  display: flex;
  align-items: center;
  padding-right: 4px;
  border: 1px solid #9ba5b6;
}
.coords label:first-child {
  width: 27px;
}
.combo input {
  flex: 1;
  min-width: 0;
  border: none;
  background: none;
  padding: 0 3px;
  font: 12px "Open Sans", sans-serif;
  color: #6b6b6b;
}
.combo + button {
  margin-left: 3px;
}

/* body */
.main {
  flex: 1;
  display: flex;
  min-height: 0;
}
.rail {
  width: 17px;
  display: flex;
  flex-direction: column;
  overflow: hidden;
}
.rail svg {
  width: 20px;
  height: 20px;
  margin: 1px 0 1px -7px;
  flex-shrink: 0;
}
.rail .dots {
  width: 11px;
  height: 12px;
  flex-shrink: 0;
  background: radial-gradient(circle, #c2c2c2 1px, transparent 2px) 0 center / 4px 4px repeat-x;
}
.rail .line {
  width: 15px;
  height: 8px;
  flex-shrink: 0;
  background: linear-gradient(#c4c4c4, #c4c4c4) center / 100% 1px no-repeat;
}
.rail .more {
  height: 13px;
  flex-shrink: 0;
  display: flex;
  align-items: center;
  padding-left: 3px;
}
.more::after {
  content: "";
  border: 3px solid transparent;
  border-left-color: #777;
  border-right: none;
}
.content {
  flex: 1;
  min-width: 0;
  display: flex;
  flex-direction: column;
}
.status {
  height: 40px;
  line-height: 42px;
  padding-left: 188px;
  border-bottom: 3px solid #e6e6e6;
}
.work {
  flex: 1;
  min-height: 0;
  display: flex;
}
.panel {
  width: 356px;
  flex-shrink: 0;
  display: flex;
  flex-direction: column;
  border-right: 3px solid #e6e6e6;
}
.panel-head {
  display: flex;
  align-items: center;
  height: 35px;
  padding: 0 3px 0 4px;
}
.panel-head h1 {
  flex: 1;
  font-size: 19px;
  font-weight: 400;
  color: #222;
}
.panel-head button {
  width: 17px;
  display: flex;
  justify-content: center;
}
.panel-head svg {
  width: 9px;
  height: 10px;
}
.panel-head .caret::after {
  border-width: 5px 5px 0;
}
.panel-tools {
  display: flex;
  align-items: center;
  height: 24px;
  padding-left: 224px;
  opacity: 0.6;
}
.panel-tools.low {
  padding-left: 237px;
}
.panel-tools svg {
  width: 20px;
  height: 20px;
  margin: 0 1px;
}
.tree {
  flex: 1;
  margin: 6px 3px 0 2px;
  background: #fff;
  border: 1px solid #b9b9b9;
  border-bottom: none;
  padding: 49px 1px 0 226px;
  overflow: hidden;
}
.tree p {
  height: 16px;
  line-height: 16px;
  white-space: nowrap;
}
.tree .hot {
  background: #e2e2e2;
}
.tree .code {
  margin-top: 48px;
}
.tree .stub {
  width: 16px;
  background: #e2e2e2;
}
.view {
  flex: 1;
  min-width: 0;
  position: relative;
  background: linear-gradient(#ccffff, #ffffcc);
  overflow: hidden;
}
.scene {
  display: block;
  width: 100%;
  height: 100%;
}
.scene text {
  font: 80px "Noto Sans CJK SC", sans-serif;
  fill: none;
  stroke: #000090;
}
.gnomon {
  position: absolute;
  left: 46px;
  bottom: 8px;
  width: 52px;
  height: 70px;
}
.gnomon text {
  font: bold 12px "DejaVu Sans", sans-serif;
}

.mark {
  position: absolute;
  left: 330px;
  top: 294px;
  display: flex;
  color: #9e9e9e;
}
.mark svg {
  width: 50px;
  height: 42px;
}
.mark .name {
  display: flex;
  gap: 10px;
  padding-left: 3px;
  font: italic 900 27px/28px "Noto Sans CJK SC", sans-serif;
}
.mark .url {
  font: bold 14px/12px "Liberation Sans", sans-serif;
}

/* toolpath surface dialog */
.dialog {
  position: absolute;
  left: 24px;
  top: 176px;
  width: 223px;
  background: #f0f0f0;
  border: 1px solid #1883d7;
  box-shadow: 2px 6px 16px rgba(0, 0, 0, 0.35);
  font-family: "Noto Sans CJK SC", sans-serif;
}
.titlebar {
  display: flex;
  align-items: center;
  justify-content: space-between;
  height: 30px;
  padding: 0 9px 2px 8px;
  background: #fff;
}
.titlebar svg {
  display: block;
  width: 12px;
  height: 12px;
}
.dialog form {
  padding: 10px 10px 17px 8px;
}
.dialog fieldset {
  min-width: 0;
  margin: 0 0 9px;
  padding: 1px 0 5px;
  border: 1px solid #dcdcdc;
}
.dialog legend {
  margin-left: 6px;
  padding: 0 1px;
  line-height: 14px;
}
.row {
  display: flex;
  gap: 8px;
}
.row + .row {
  margin-top: 9px;
}
.row span {
  width: 67px;
  text-align: right;
  line-height: 27px;
}
.off .row span {
  color: #a0a0a0;
}
.row button {
  width: 52px;
  height: 27px;
  display: flex;
  align-items: center;
  justify-content: center;
  background: #e1e1e1;
  border: 1px solid #adadad;
}
.row button:disabled {
  background: #ccc;
  border-color: #bfbfbf;
}
.row .hover {
  background: #e5f1fb;
  border-color: #0078d7;
}
.row .default {
  border: 2px solid #0078d7;
}
.row svg {
  width: 20px;
  height: 20px;
}
.actions {
  padding: 3px 0 0 1px;
}
.tip {
  position: absolute;
  left: 100px;
  top: 368px;
  padding: 0 5px;
  line-height: 20px;
  color: #575757;
  background: #fff;
  border: 1px solid #767676;
  box-shadow: 2px 2px 2px rgba(0, 0, 0, 0.4);
}
.callout {
  position: absolute;
  left: -1px;
  top: 313px;
  width: 227px;
  height: 56px;
  border: 3px solid #fb3b3b;
}
.pointer {
  position: absolute;
  left: 64px;
  top: 352px;
  width: 46px;
  height: 50px;
}
```
